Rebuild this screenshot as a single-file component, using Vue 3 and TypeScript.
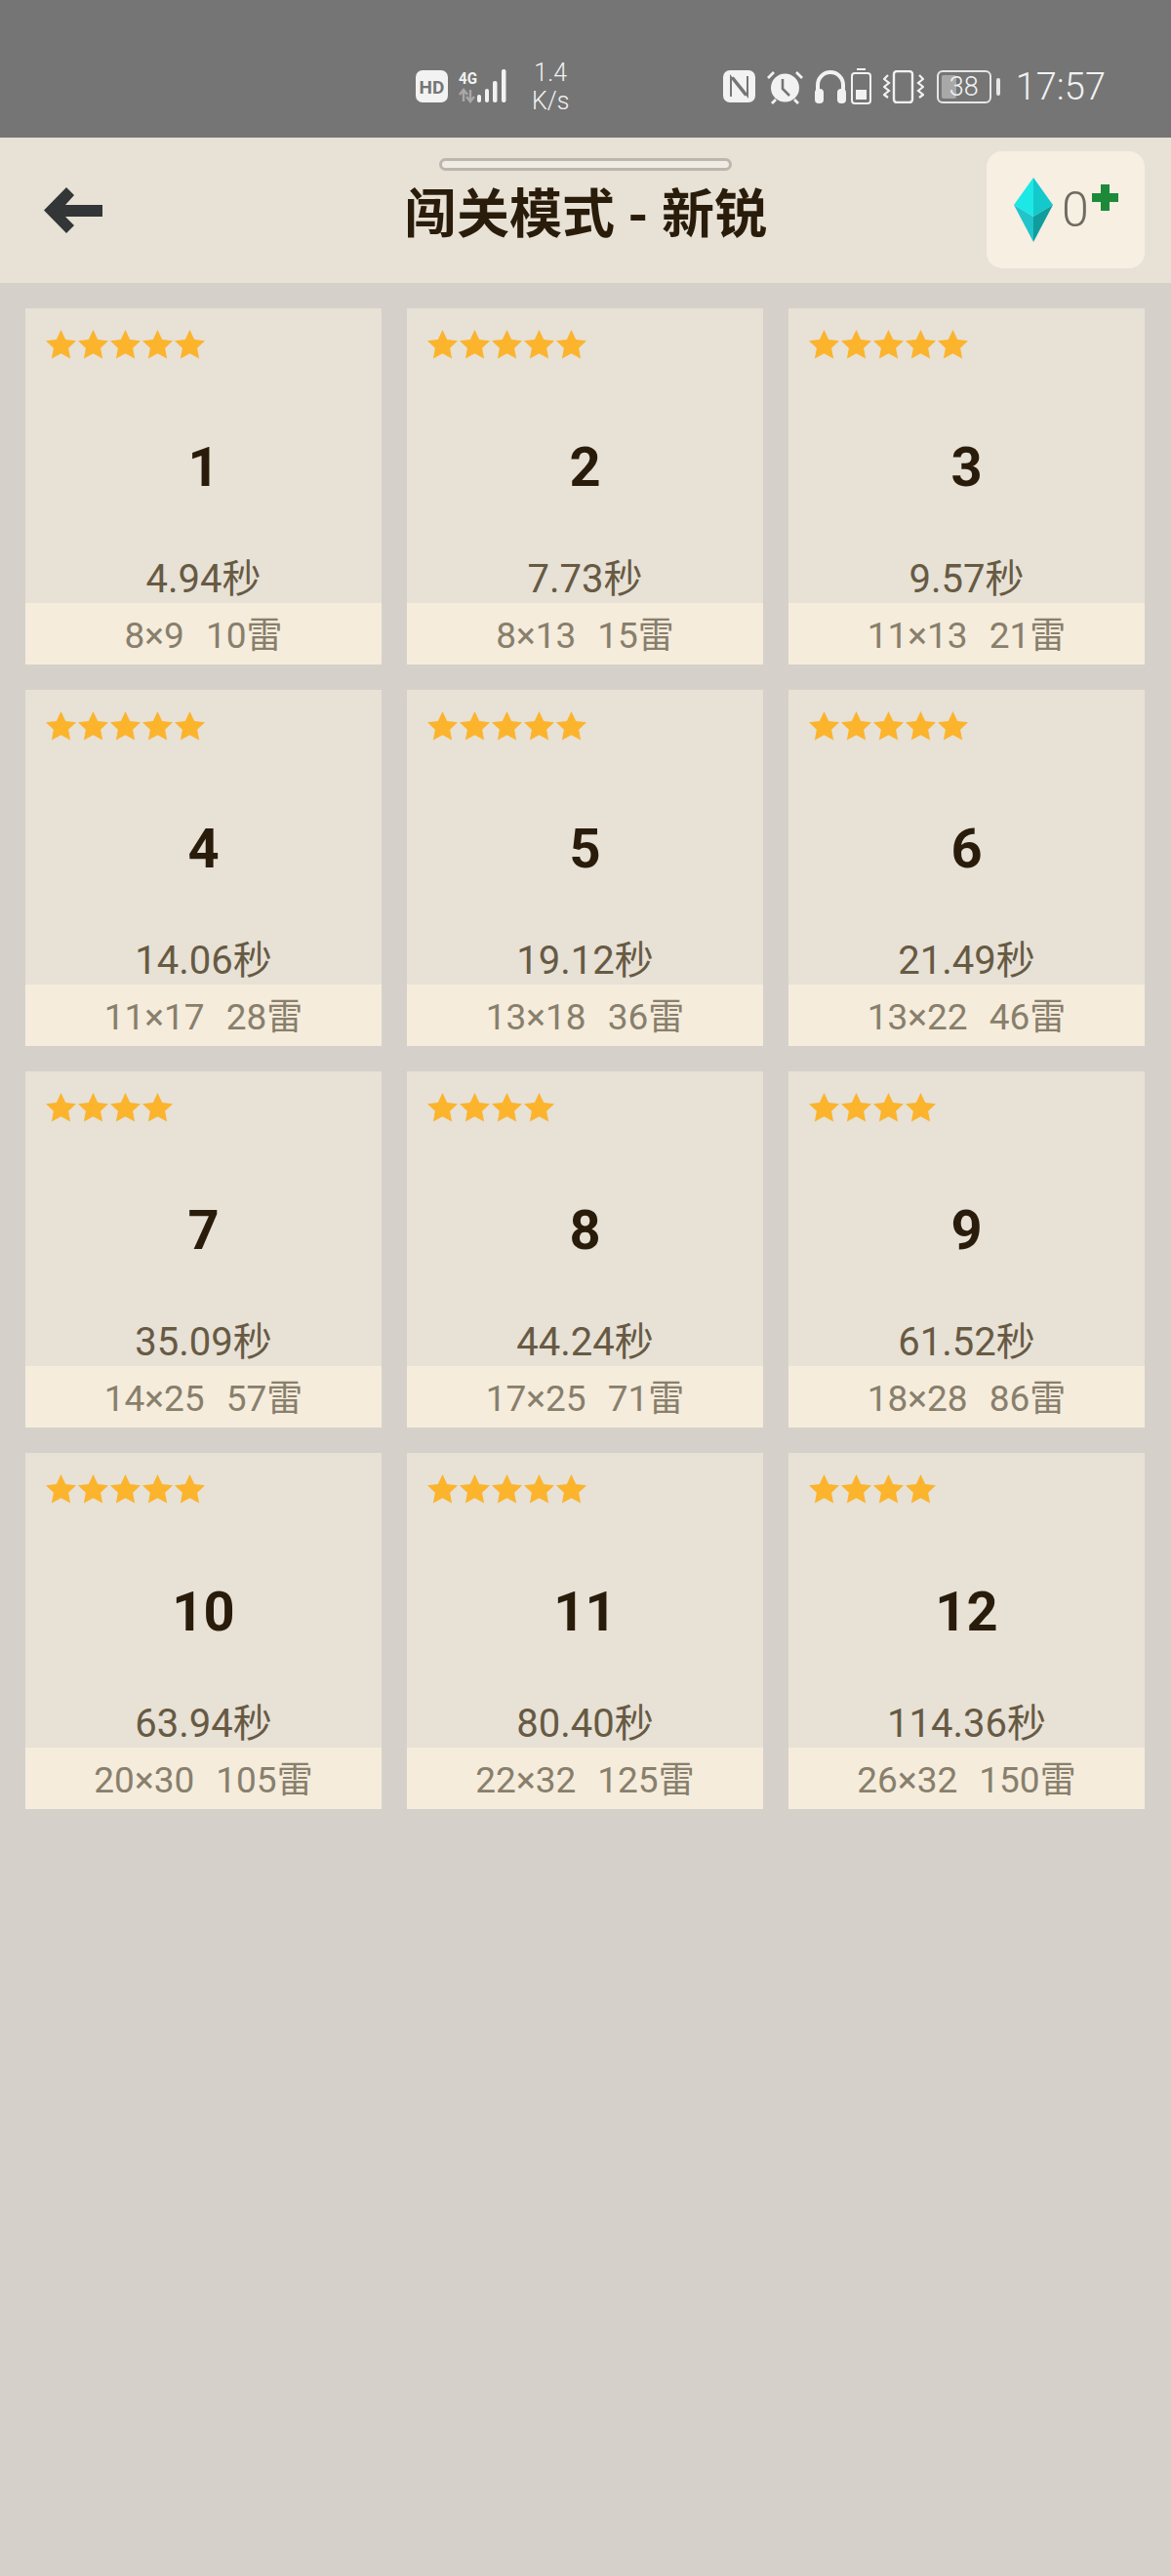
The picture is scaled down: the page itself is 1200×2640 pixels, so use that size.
<script setup lang="ts">
interface Level {
  id: number
  stars: number
  time: string
  size: string
  mines: number
}

const levels: Level[] = [
  { id: 1, stars: 5, time: '4.94', size: '8×9', mines: 10 },
  { id: 2, stars: 5, time: '7.73', size: '8×13', mines: 15 },
  { id: 3, stars: 5, time: '9.57', size: '11×13', mines: 21 },
  { id: 4, stars: 5, time: '14.06', size: '11×17', mines: 28 },
  { id: 5, stars: 5, time: '19.12', size: '13×18', mines: 36 },
  { id: 6, stars: 5, time: '21.49', size: '13×22', mines: 46 },
  { id: 7, stars: 4, time: '35.09', size: '14×25', mines: 57 },
  { id: 8, stars: 4, time: '44.24', size: '17×25', mines: 71 },
  { id: 9, stars: 4, time: '61.52', size: '18×28', mines: 86 },
  { id: 10, stars: 5, time: '63.94', size: '20×30', mines: 105 },
  { id: 11, stars: 5, time: '80.40', size: '22×32', mines: 125 },
  { id: 12, stars: 4, time: '114.36', size: '26×32', mines: 150 },
]
</script>

<template>
  <div class="page">
    <div class="status-bar">
      <div class="status-left">
        <svg class="ic-hd" width="33" height="33" viewBox="0 0 33 33">
          <rect width="33" height="33" rx="7" fill="#f2f2f2" />
          <text x="16.500" y="23.500" text-anchor="middle" class="hd-text">HD</text>
        </svg>
        <svg class="ic-signal" width="56" height="36" viewBox="0 0 56 36">
          <text x="0" y="15" textLength="19" lengthAdjust="spacingAndGlyphs" class="net-text">4G</text>
          <path d="M5 21v12M1 26l4-5 4 5" fill="none" stroke="#a8a8a8" stroke-width="2.400" />
          <path d="M12 33V21M8 28l4 5 4-5" fill="none" stroke="#a8a8a8" stroke-width="2.400" />
          <rect x="19" y="26" width="4" height="8" rx="2" fill="#f2f2f2" />
          <rect x="27" y="20" width="4" height="14" rx="2" fill="#f2f2f2" />
          <rect x="35" y="12" width="4.500" height="22" rx="2" fill="#f2f2f2" />
          <rect x="44" y="0" width="4.500" height="34" rx="2" fill="#f2f2f2" />
        </svg>
        <div class="speed"><span>1.4</span><span>K/s</span></div>
      </div>
      <div class="status-right">
        <svg width="33" height="33" viewBox="0 0 33 33">
          <rect width="33" height="33" rx="7" fill="#f2f2f2" />
          <path d="M8 27V7L23 26M25 6V26L10 7" fill="none" stroke="#757575" stroke-width="2" />
        </svg>
        <svg width="37" height="36" viewBox="0 0 37 36">
          <circle cx="18.500" cy="19" r="14.500" fill="#f2f2f2" />
          <path d="M16 10v10l7 7" fill="none" stroke="#757575" stroke-width="2.600" />
          <path d="M1 9l6-6M36 9l-6-6M5 35l4-4M32 35l-4-4" stroke="#f2f2f2" stroke-width="2.800" />
        </svg>
        <svg width="32" height="34" viewBox="0 0 32 34">
          <path d="M3 24V15a13 13 0 0 1 26 0v9" fill="none" stroke="#f2f2f2" stroke-width="4" />
          <rect x="0" y="19" width="9" height="15" rx="4" fill="#f2f2f2" />
          <rect x="23" y="19" width="9" height="15" rx="4" fill="#f2f2f2" />
        </svg>
        <svg class="tight" width="21" height="37" viewBox="0 0 21 37">
          <rect x="6" y="0" width="9" height="2" fill="#f2f2f2" />
          <rect x="1" y="5" width="19" height="31" rx="3" fill="none" stroke="#f2f2f2" stroke-width="2" />
          <rect x="5" y="22" width="11" height="10" fill="#f2f2f2" />
        </svg>
        <svg width="42" height="34" viewBox="0 0 42 34">
          <rect x="11" y="1" width="19" height="32" rx="3" fill="none" stroke="#f2f2f2" stroke-width="2.400" />
          <path d="M5 5l-4 4 5 4-5 4 5 4-5 4 4 3M37 5l4 4-5 4 5 4-5 4 5 4-4 3" fill="none" stroke="#f2f2f2" stroke-width="2.200" />
        </svg>
        <div class="battery">
          <div class="battery-body">
            <div class="battery-fill"></div>
            <span>38</span>
          </div>
          <div class="battery-cap"></div>
        </div>
        <span class="clock">17:57</span>
      </div>
    </div>

    <header class="top-bar">
      <div class="drag-handle"></div>
      <svg class="back" width="60" height="47" viewBox="0 0 60 47">
        <path d="M23 0 31 8 22 18H60V30H22L31 39 23 47 0 23.500Z" fill="#333636" />
      </svg>
      <h1 class="title">闯关模式 - 新锐</h1>
      <div class="gems">
        <svg width="40" height="66" viewBox="0 0 40 66">
          <path d="M20 0 0 28 20 40Z" fill="#1ce8e6" />
          <path d="M20 0 40 28 20 40Z" fill="#14c9cc" />
          <path d="M0 28 20 66V40Z" fill="#21c4cb" />
          <path d="M40 28 20 66V40Z" fill="#0f9d9d" />
        </svg>
        <span class="gem-count">0</span>
        <svg class="plus" width="27" height="27" viewBox="0 0 27 27">
          <path d="M9 0h9v9h9v9h-9v9H9v-9H0V9h9Z" fill="#1d8a3a" />
        </svg>
      </div>
    </header>

    <main class="grid">
      <div v-for="level in levels" :key="level.id" class="card">
        <div class="stars">
          <svg v-for="n in level.stars" :key="n" width="33" height="30" viewBox="0 0 33 30">
            <path d="M15.500 0l4.700 9.900 10.800 1.400-7.900 7.500 2 10.700-9.600-5.200-9.600 5.200 2-10.700L0 11.300l10.800-1.400Z" fill="#fbb42c" />
          </svg>
        </div>
        <div class="num">{{ level.id }}</div>
        <div class="time">{{ level.time }}秒</div>
        <div class="info">{{ level.size }}<span class="mines">{{ level.mines }}雷</span></div>
      </div>
    </main>
  </div>
</template>

<style scoped>
.page {
  width: 1200px;
  height: 2640px;
  background: #d5d1ca;
  font-family: "Roboto", "Noto Sans CJK SC", sans-serif;
  overflow: hidden;
}

.status-bar {
  height: 141px;
  background: #757575;
  color: #f2f2f2;
  display: flex;
  justify-content: space-between;
  align-items: center;
  padding: 36px 67px 0 426px;
  box-sizing: border-box;
}

.status-left,
.status-right {
  display: flex;
  align-items: center;
}

.ic-hd {
  margin-right: 11px;
}

.hd-text {
  font: 700 19px "Roboto", sans-serif;
  fill: #757575;
}

.net-text {
  font: 700 16px "Roboto", sans-serif;
  fill: #f2f2f2;
}

.speed {
  display: flex;
  flex-direction: column;
  align-items: center;
  font-size: 25px;
  line-height: 29px;
  margin-left: 19px;
  font-weight: 300;
}

.status-right {
  gap: 12px;
  padding-left: 2px;
}

.tight {
  margin-left: -7px;
}

.battery {
  display: flex;
  align-items: center;
  gap: 5px;
  margin-left: 1px;
}

.battery-body {
  position: relative;
  width: 56px;
  height: 34px;
  border: 2px solid #e6e6e6;
  border-radius: 6px;
  display: flex;
  align-items: center;
  justify-content: center;
  font-size: 27px;
  font-weight: 300;
  box-sizing: border-box;
}

.battery-body span {
  position: relative;
}

.battery-fill {
  position: absolute;
  left: 3px;
  top: 3px;
  bottom: 3px;
  width: 15px;
  border-radius: 2px;
  background: #a8a8a8;
}

.battery-cap {
  width: 4px;
  height: 18px;
  background: #e6e6e6;
  border-radius: 2px;
}

.clock {
  font-size: 38px;
  font-weight: 300;
  margin-left: 4px;
}

.top-bar {
  position: relative;
  height: 149px;
  background: #e7e1d6;
  display: flex;
  align-items: center;
  justify-content: space-between;
  padding: 0 27px 0 45px;
  box-sizing: border-box;
}

.drag-handle {
  position: absolute;
  left: 450px;
  top: 21px;
  width: 300px;
  height: 13px;
  box-sizing: border-box;
  background: #f0ece3;
  border: 3px solid #bbb7ae;
  border-radius: 7px;
}

.title {
  position: absolute;
  left: 0;
  right: 0;
  top: 45px;
  margin: 0;
  text-align: center;
  font-size: 54px;
  line-height: 70px;
  font-weight: 700;
  color: #2a1c0a;
}

.gems {
  width: 162px;
  height: 120px;
  margin-top: -2px;
  background: #f6efe2;
  border-radius: 16px;
  display: flex;
  align-items: center;
  padding-left: 28px;
  box-sizing: border-box;
  position: relative;
}

.gem-count {
  font-size: 50px;
  font-weight: 300;
  color: #6f6a62;
  margin-left: 9px;
}

.plus {
  position: absolute;
  left: 108px;
  top: 34px;
}

.grid {
  display: grid;
  grid-template-columns: repeat(3, 365px);
  grid-auto-rows: 365px;
  gap: 26px;
  padding: 26px 27px 0 26px;
}

.card {
  background: #e7e1d6;
  display: flex;
  flex-direction: column;
}

.stars {
  display: flex;
  padding: 22px 0 0 21px;
  height: 52px;
  box-sizing: border-box;
}

.num {
  margin-top: 76px;
  text-align: center;
  font-size: 56px;
  line-height: 70px;
  font-weight: 700;
  color: #2a1c0a;
}

.time {
  margin-top: 56px;
  text-align: center;
  font-size: 40px;
  line-height: 48px;
  color: #675a43;
}

.info {
  margin-top: auto;
  height: 63px;
  line-height: 68px;
  background: #f5ecdc;
  text-align: center;
  font-size: 37px;
  color: #887f6c;
}

.mines {
  margin-left: 22px;
}
</style>

<style>
body {
  background: #d5d1ca;
}
</style>
